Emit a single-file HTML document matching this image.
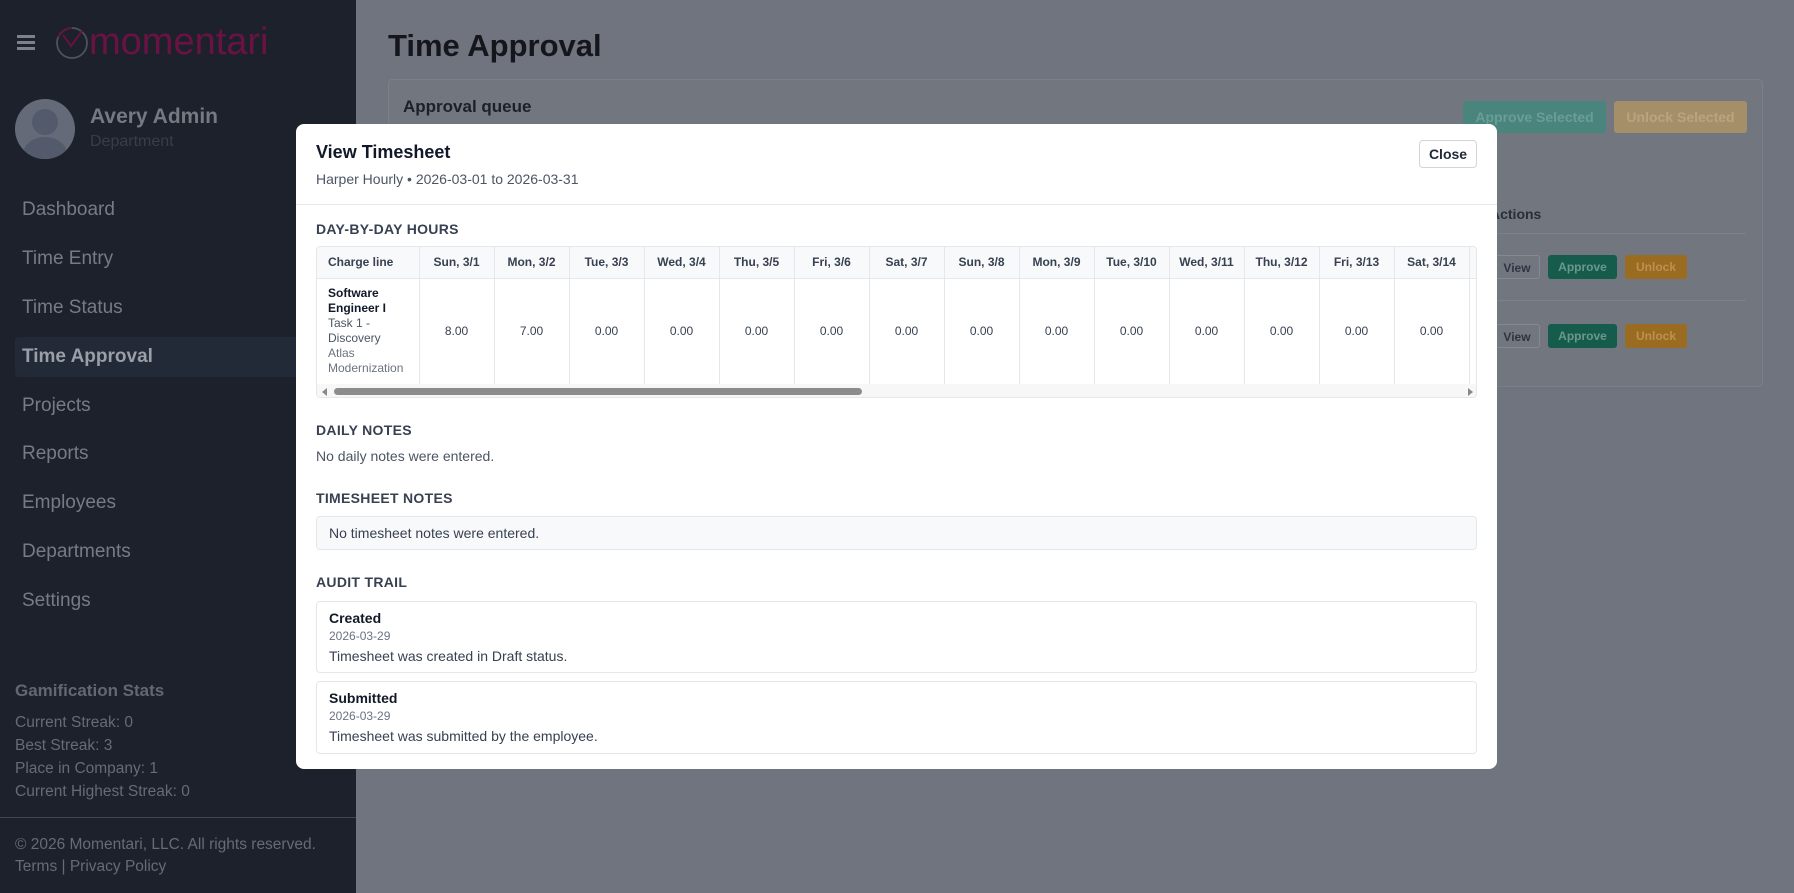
<!DOCTYPE html>
<html><head><meta charset="utf-8"><style>
*{box-sizing:border-box;margin:0;padding:0}
body{width:1794px;height:893px;overflow:hidden;font-family:"Liberation Sans",Arial,sans-serif;background:#70747f;position:relative}
.abs{position:absolute}
.side{left:0;top:0;width:356px;height:893px;background:#1d212b}
.nav{position:absolute;left:22px;font-size:19px;color:#767b85;line-height:24px}
.stat{position:absolute;left:15px;font-size:15.5px;color:#666b75;line-height:20px}
.modal{left:296px;top:124px;width:1201px;height:645px;background:#fff;border-radius:8px;overflow:hidden}
.h{position:absolute;left:20px;font-size:14px;font-weight:bold;color:#374151;letter-spacing:.3px}
table{border-collapse:collapse;table-layout:fixed}
td,th{border-right:1px solid #e5e7eb;border-bottom:1px solid #e5e7eb;font-size:12px;text-align:center;color:#374151}
th{height:31px;background:#f8f9fb;font-weight:bold}
td{height:106px}
.card{position:absolute;left:20px;width:1161px;border:1px solid #e5e7eb;border-radius:4px;background:#fff}
.card b{position:absolute;left:12px;font-size:14px;color:#111827}
.card .d{position:absolute;left:12px;font-size:12px;color:#6b7280}
.card .t{position:absolute;left:12px;font-size:14px;color:#374151}
.btn{position:absolute;border-radius:3px;font-size:12px;font-weight:bold;text-align:center;line-height:24px}
</style></head><body>
<div class="abs side">
  <div class="abs" style="left:17px;top:35px;width:18px;height:3px;background:#7d818b;box-shadow:0 6px 0 #7d818b,0 12px 0 #7d818b"></div>
  <svg class="abs" style="left:54px;top:25px" width="36" height="36" viewBox="0 0 36 36"><circle cx="18" cy="18" r="15" fill="none" stroke="#4e525c" stroke-width="1.8"/><path d="M4 12 A15 15 0 0 1 18 3" fill="none" stroke="#661240" stroke-width="1.8"/><path d="M9 10 L17 21 L28 6" fill="none" stroke="#661240" stroke-width="2"/></svg>
  <div class="abs" style="left:89px;top:19px;font-size:38px;color:#6a1244;line-height:46px">momentari</div>
  <div class="abs" style="left:15px;top:99px;width:60px;height:60px;border-radius:50%;background:#646a77;overflow:hidden">
    <div class="abs" style="left:17px;top:10px;width:26px;height:26px;border-radius:50%;background:#525a6c"></div>
    <div class="abs" style="left:8px;top:38px;width:44px;height:34px;border-radius:50%;background:#525a6c"></div>
  </div>
  <div class="abs" style="left:90px;top:105px;font-size:21px;font-weight:bold;color:#757982">Avery Admin</div>
  <div class="abs" style="left:90px;top:133px;font-size:16px;color:#383d48">Department</div>
  <div class="abs" style="left:15px;top:337px;width:341px;height:40px;background:#222937;border-radius:4px 0 0 4px"></div>
  <div class="nav" style="top:198px">Dashboard</div>
  <div class="nav" style="top:247px">Time Entry</div>
  <div class="nav" style="top:296px">Time Status</div>
  <div class="nav" style="top:345px;font-weight:bold;color:#9a9ea7">Time Approval</div>
  <div class="nav" style="top:394px">Projects</div>
  <div class="nav" style="top:442px">Reports</div>
  <div class="nav" style="top:491px">Employees</div>
  <div class="nav" style="top:540px">Departments</div>
  <div class="nav" style="top:589px">Settings</div>
  <div class="abs" style="left:15px;top:681px;font-size:17px;font-weight:bold;color:#626771">Gamification Stats</div>
  <div class="stat" style="top:713px">Current Streak: 0</div>
  <div class="stat" style="top:736px">Best Streak: 3</div>
  <div class="stat" style="top:759px">Place in Company: 1</div>
  <div class="stat" style="top:782px">Current Highest Streak: 0</div>
  <div class="abs" style="left:0;top:817px;width:356px;height:1px;background:#42464f"></div>
  <div class="stat" style="top:835px">© 2026 Momentari, LLC. All rights reserved.</div>
  <div class="stat" style="top:857px">Terms | Privacy Policy</div>
</div>
<div class="abs" style="left:388px;top:28px;font-size:31px;font-weight:bold;color:#14161b">Time Approval</div>
<div class="abs" style="left:388px;top:79px;width:1375px;height:308px;background:#72767f;border:1px solid #7b7f89;border-radius:4px"></div>
<div class="abs" style="left:403px;top:97px;font-size:17px;font-weight:bold;color:#1d2029">Approval queue</div>
<div class="btn" style="left:1463px;top:101px;width:143px;height:32px;line-height:32px;background:#4a857d;color:#6a9d96;font-size:14px">Approve Selected</div>
<div class="btn" style="left:1614px;top:101px;width:133px;height:32px;line-height:32px;background:#a58f69;color:#b8a47e;font-size:14px">Unlock Selected</div>
<div class="abs" style="left:1490px;top:206px;font-size:14px;font-weight:bold;color:#2a2e38">Actions</div>
<div class="abs" style="left:1490px;top:233px;width:256px;height:1px;background:#7d818b"></div>
<div class="abs" style="left:1490px;top:300px;width:256px;height:1px;background:#7d818b"></div>
<div class="btn" style="left:1494px;top:255px;width:46px;height:24px;border:1px solid #858994;color:#2e3442">View</div>
<div class="btn" style="left:1548px;top:255px;width:69px;height:24px;background:#155c4d;color:#6c988c">Approve</div>
<div class="btn" style="left:1625px;top:255px;width:62px;height:24px;background:#9a6c22;color:#bc9050">Unlock</div>
<div class="btn" style="left:1494px;top:324px;width:46px;height:24px;border:1px solid #858994;color:#2e3442">View</div>
<div class="btn" style="left:1548px;top:324px;width:69px;height:24px;background:#155c4d;color:#6c988c">Approve</div>
<div class="btn" style="left:1625px;top:324px;width:62px;height:24px;background:#9a6c22;color:#bc9050">Unlock</div>

<div class="abs modal">
  <div class="abs" style="left:20px;top:18px;font-size:18px;font-weight:bold;color:#111827">View Timesheet</div>
  <div class="abs" style="left:20px;top:47px;font-size:14px;color:#4b5563">Harper Hourly • 2026-03-01 to 2026-03-31</div>
  <div class="abs" style="left:1123px;top:16px;width:58px;height:28px;border:1px solid #d1d5db;border-radius:4px;font-size:14px;font-weight:bold;text-align:center;line-height:26px;color:#1f2937">Close</div>
  <div class="abs" style="left:0;top:80px;width:1201px;height:1px;background:#e5e7eb"></div>
  <div class="h" style="top:97px">DAY-BY-DAY HOURS</div>
  <div class="abs" style="left:20px;top:122px;width:1161px;height:152px;border:1px solid #e5e7eb;border-radius:4px;overflow:hidden">
    <table style="width:1200px">
      <colgroup><col style="width:102px"><col span="14" style="width:75px"><col style="width:48px"></colgroup>
      <tr><th style="text-align:left;padding-left:11px">Charge line</th><th>Sun, 3/1</th><th>Mon, 3/2</th><th>Tue, 3/3</th><th>Wed, 3/4</th><th>Thu, 3/5</th><th>Fri, 3/6</th><th>Sat, 3/7</th><th>Sun, 3/8</th><th>Mon, 3/9</th><th>Tue, 3/10</th><th>Wed, 3/11</th><th>Thu, 3/12</th><th>Fri, 3/13</th><th>Sat, 3/14</th><th></th></tr>
      <tr><td style="text-align:left;padding-left:11px;line-height:15px;font-size:12px"><b style="color:#111827">Software Engineer I</b><br><span style="color:#4b5563">Task 1 - Discovery</span><br><span style="color:#6b7280">Atlas Modernization</span></td><td>8.00</td><td>7.00</td><td>0.00</td><td>0.00</td><td>0.00</td><td>0.00</td><td>0.00</td><td>0.00</td><td>0.00</td><td>0.00</td><td>0.00</td><td>0.00</td><td>0.00</td><td>0.00</td><td></td></tr>
    </table>
    <div class="abs" style="left:0;top:137px;width:1161px;height:15px;background:#f7f7f7"></div>
    <div class="abs" style="left:17px;top:141px;width:528px;height:7px;border-radius:4px;background:#8c8c8c"></div>
    <div class="abs" style="left:5px;top:141px;width:0;height:0;border-top:4px solid transparent;border-bottom:4px solid transparent;border-right:5px solid #888"></div>
    <div class="abs" style="left:1151px;top:141px;width:0;height:0;border-top:4px solid transparent;border-bottom:4px solid transparent;border-left:5px solid #888"></div>
  </div>
  <div class="h" style="top:298px">DAILY NOTES</div>
  <div class="abs" style="left:20px;top:324px;font-size:14px;color:#4b5563">No daily notes were entered.</div>
  <div class="h" style="top:366px">TIMESHEET NOTES</div>
  <div class="abs" style="left:20px;top:392px;width:1161px;height:34px;border:1px solid #e5e7eb;border-radius:4px;background:#f8f9fb;font-size:14px;color:#374151;padding-left:12px;line-height:32px">No timesheet notes were entered.</div>
  <div class="h" style="top:450px">AUDIT TRAIL</div>
  <div class="card" style="top:477px;height:72px"><b style="top:8px">Created</b><span class="d" style="top:27px">2026-03-29</span><span class="t" style="top:46px">Timesheet was created in Draft status.</span></div>
  <div class="card" style="top:557px;height:73px"><b style="top:8px">Submitted</b><span class="d" style="top:27px">2026-03-29</span><span class="t" style="top:46px">Timesheet was submitted by the employee.</span></div>
</div>
</body></html>
